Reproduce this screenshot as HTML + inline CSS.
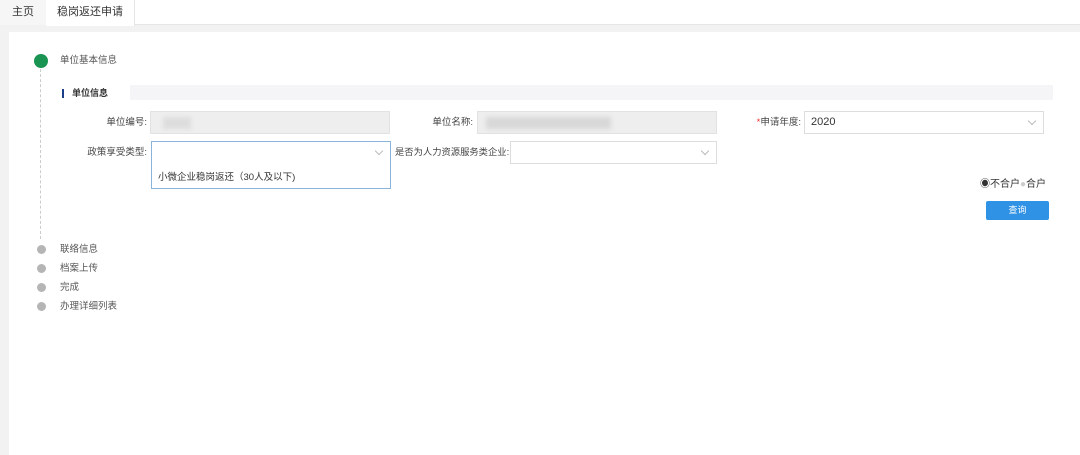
<!DOCTYPE html>
<html><head><meta charset="utf-8"><style>
*{margin:0;padding:0;box-sizing:border-box}
body{width:1080px;height:455px;background:#f2f2f2;font-family:"Liberation Sans","Noto Sans CJK SC",sans-serif;font-size:9.5px;color:#333;position:relative;overflow:hidden}
.a{position:absolute;white-space:nowrap}
.tabbar{left:0;top:0;width:1080px;height:25px;background:#fff;border-bottom:1px solid #e6e6e6}
.main{left:9px;top:32px;width:1071px;height:423px;background:#fff}
.lbl{text-align:right;line-height:23px;color:#444}
.in{height:23px;border:1px solid #ddd;background:#fff}
.gray{background:#eee;border-color:#e2e2e2}
.chev{position:absolute;right:8px;top:6px;width:6px;height:6px;border-right:1px solid #bbb;border-bottom:1px solid #bbb;transform:rotate(45deg)}
.dot{width:9px;height:9px;border-radius:50%;background:#b5b5b5}
.st{color:#555;line-height:12px}
</style></head><body>
<div class="a tabbar"></div>
<div class="a" style="left:0;top:0;width:46px;height:25px;background:#f6f6f6;line-height:24px;text-align:center;font-size:11px">主页</div>
<div class="a" style="left:46px;top:0;width:89px;height:26px;background:#fff;border-right:1px solid #e6e6e6;line-height:24px;text-align:center;font-size:11px">稳岗返还申请</div>
<div class="a main"></div>
<div class="a" style="left:34px;top:54px;width:14px;height:14px;border-radius:50%;background:#1a9452"></div>
<div class="a st" style="left:60px;top:55px">单位基本信息</div>
<div class="a" style="left:40px;top:69px;height:170px;border-left:1px dashed #ccc"></div>
<div class="a" style="left:130px;top:85px;width:923px;height:15px;background:#f5f5f7"></div>
<div class="a" style="left:62px;top:89px;width:2px;height:9px;background:#1c3f8c"></div>
<div class="a" style="left:72px;top:87px;font-weight:bold;font-size:9px;line-height:12px">单位信息</div>
<div class="a lbl" style="left:60px;top:111px;width:87px">单位编号:</div>
<div class="a in gray" style="left:150px;top:111px;width:240px"><div style="position:absolute;left:12px;top:5px;width:28px;height:12px;background:#ddd;filter:blur(2px)"></div></div>
<div class="a lbl" style="left:400px;top:111px;width:73px">单位名称:</div>
<div class="a in gray" style="left:477px;top:111px;width:240px"><div style="position:absolute;left:8px;top:5px;width:125px;height:12px;background:#d8d8d8;filter:blur(2px)"></div></div>
<div class="a lbl" style="left:730px;top:111px;width:71px"><span style="color:#e33">*</span>申请年度:</div>
<div class="a in" style="left:804px;top:111px;width:240px;line-height:21px;padding-left:6px;font-size:11px">2020<div class="chev"></div></div>
<div class="a lbl" style="left:60px;top:141px;width:87px">政策享受类型:</div>
<div class="a in" style="left:151px;top:141px;width:240px;height:48px;border-color:#8ab4d9"><div class="chev"></div><div style="position:absolute;left:6px;top:30px;line-height:12px;font-size:9.5px">小微企业稳岗返还（30人及以下)</div></div>
<div class="a lbl" style="left:395px;top:141px;width:113px;text-align:left;font-size:9.3px">是否为人力资源服务类企业:</div>
<div class="a in" style="left:510px;top:141px;width:207px"><div class="chev"></div></div>
<div class="a" style="left:980px;top:179px;line-height:12px;font-size:10px;color:#333">◉不合户<span style="color:#ccc">●</span>合户</div>
<div class="a" style="left:986px;top:201px;width:63px;height:19px;background:#2f92e4;color:#fff;text-align:center;line-height:19px;font-size:9px;border-radius:2px">查询</div>
<div class="a dot" style="left:37px;top:245px"></div><div class="a st" style="left:60px;top:244px">联络信息</div>
<div class="a dot" style="left:37px;top:264px"></div><div class="a st" style="left:60px;top:263px">档案上传</div>
<div class="a dot" style="left:37px;top:283px"></div><div class="a st" style="left:60px;top:282px">完成</div>
<div class="a dot" style="left:37px;top:302px"></div><div class="a st" style="left:60px;top:301px">办理详细列表</div>
</body></html>
